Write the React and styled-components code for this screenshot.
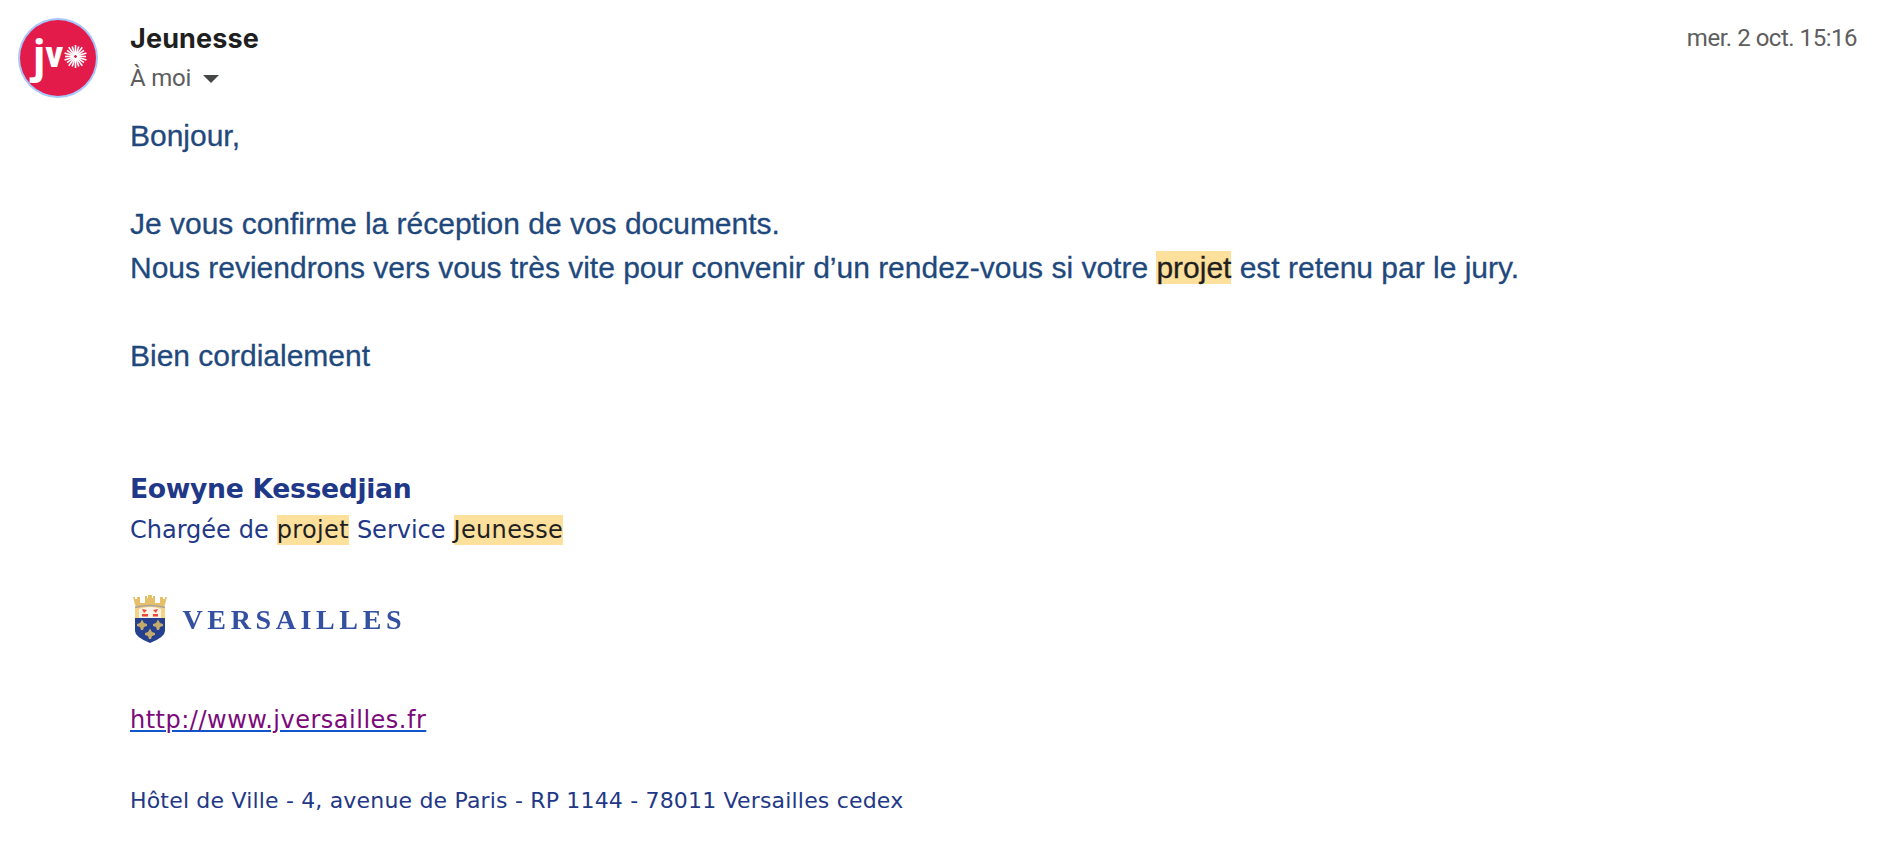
import styled, { createGlobalStyle } from 'styled-components';

const GlobalStyle = createGlobalStyle`
  * {
    box-sizing: border-box;
  }

  body {
    margin: 0;
    background-color: #fff;
  }
`;

const Message = styled.article`
  display: grid;
  grid-template-columns: 80px 1fr;
  column-gap: 32px;
  padding: 18px 23px 0 18px;
  height: 860px;
  overflow: hidden;
`;

const Avatar = styled.svg`
  display: block;
  width: 80px;
  height: 80px;
`;

const Header = styled.header`
  display: flex;
  justify-content: space-between;
  height: 96px;
  font-family: Roboto, 'Noto Sans', sans-serif;
`;

const Sender = styled.h3`
  margin: 0;
  padding-top: 3px;
  font-family: Inter, 'Open Sans', sans-serif;
  font-size: 27px;
  font-weight: 650;
  line-height: 36px;
  letter-spacing: 0.15px;
  color: #1f1f1f;
`;

const Recipient = styled.div`
  display: flex;
  align-items: center;
  gap: 12px;
  margin-top: 3px;
  font-size: 24px;
  line-height: 36px;
  letter-spacing: -0.2px;
  color: #5e5e5e;
`;

const Caret = styled.span`
  margin-top: 1px;
  border: 8px solid transparent;
  border-top-color: #444746;
  border-bottom: 0;
`;

const SentAt = styled.time`
  padding-top: 2px;
  font-size: 24px;
  line-height: 36px;
  letter-spacing: -0.48px;
  color: #5e5e5e;
`;

const Body = styled.div`
  font-family: 'Liberation Sans', Arial, sans-serif;
  font-size: 30px;
  line-height: 44px;
  letter-spacing: -0.01px;
  color: #1f497d;
  -webkit-text-stroke: 0.3px;
`;

const Paragraph = styled.p`
  margin: 0 0 44px;
  white-space: nowrap;
`;

const Mark = styled.mark`
  background-color: #fce09b;
  color: #1f1f1f;
`;

const Signature = styled.footer`
  padding-top: 47px;
  font-family: 'DejaVu Sans', Verdana, sans-serif;
  color: #1f3887;
`;

const Name = styled.div`
  font-size: 26.67px;
  font-weight: 700;
  line-height: 40px;
  letter-spacing: -0.35px;
`;

const Role = styled.div`
  margin-top: 1px;
  font-size: 24px;
  line-height: 40px;
  word-spacing: 0.3px;

  ${Mark} {
    padding: 1px 0;
    letter-spacing: 0.35px;
  }
`;

const Logo = styled.svg`
  display: block;
  width: 276px;
  height: 50px;
  margin-top: 45px;
  filter: blur(0.6px);
`;

const Site = styled.a`
  display: block;
  width: max-content;
  margin-top: 55px;
  font-size: 24px;
  line-height: 40px;
  letter-spacing: 0.5px;
  color: #7b0a7b;
  text-decoration: underline #1155cc 1.5px;
  text-underline-offset: 2px;
`;

const Address = styled.div`
  margin-top: 41px;
  font-size: 22px;
  line-height: 40px;
  letter-spacing: 0.18px;
`;

const RAYS = Array.from({ length: 20 }, (_, i) => i * 18);

const JvAvatar = () => (
  <Avatar viewBox="0 0 80 80">
    <circle cx="40" cy="40" r="40" fill="#a8c7fa" />
    <circle cx="40" cy="40" r="38" fill="#e31b4b" />
    <g fill="#fff" fontWeight="700">
      <text x="14.5" y="54" fontFamily="'Open Sans', sans-serif" fontSize="44">
        j
      </text>
      <text
        x="27.5"
        y="48.5"
        fontFamily="Roboto, sans-serif"
        fontWeight="900"
        fontSize="36"
        textLength="17.5"
        lengthAdjust="spacingAndGlyphs"
      >
        v
      </text>
    </g>
    <g transform="translate(57.5 38.5)" stroke="#fff" strokeWidth="1.6">
      {RAYS.map((angle, i) => (
        <line key={angle} x1="0" y1="-1.5" x2="0" y2={i % 2 ? -10.5 : -11.5} transform={`rotate(${angle})`} />
      ))}
    </g>
  </Avatar>
);

const FLEURS = [
  [12, 30],
  [28, 30],
  [20, 39],
];

const VersaillesLogo = () => (
  <Logo viewBox="0 0 276 50">
    {/* crown */}
    <path d="M3 2h2v2h2V2h3v6h5V1h2v2h1V0h4v3h1V1h2v7h5V2h3v2h2V2h2l-3 11H6z" fill="#e6c069" />
    <path d="M5 12q15-4 30 0v12H5z" fill="#f3d388" />
    <path d="M9 14q11-4 22 0v9H9z" fill="#fdf3e6" />
    <path d="M5 12.500q15-4 30 0" fill="none" stroke="#a8a39a" strokeWidth="1.500" />
    <path d="M12 14l5 1-3 3zM28 14l-5 1 3 3zM12 19h6v2.500h-6zM23 19h5v2.500h-5z" fill="#ea4a35" />
    {/* shield */}
    <path d="M5 23h30v13q0 6-15 12Q5 42 5 36z" fill="#24408f" />
    {FLEURS.map(([x, y]) => (
      <path
        key={`${x}-${y}`}
        transform={`translate(${x} ${y})`}
        d="M0-5.500L2-2 5-1v2L2 2 1 5h-2L-2 2-5 1v-2l3-1z"
        fill="#c2ab6c"
      />
    ))}
    <text
      x="52.500"
      y="34.300"
      fontFamily="'Liberation Serif', serif"
      fontSize="28"
      fontWeight="700"
      textLength="219"
      fill="#3450a0"
    >
      VERSAILLES
    </text>
  </Logo>
);

const App = () => {
  return (
    <>
      <GlobalStyle />
      <Message>
        <JvAvatar />
        <div>
          <Header>
            <div>
              <Sender>Jeunesse</Sender>
              <Recipient>
                À moi
                <Caret />
              </Recipient>
            </div>
            <SentAt>mer. 2 oct. 15:16</SentAt>
          </Header>
          <Body>
            <Paragraph>Bonjour,</Paragraph>
            <Paragraph>
              Je vous confirme la réception de vos documents.
              <br />
              Nous reviendrons vers vous très vite pour convenir d’un rendez-vous si votre <Mark>projet</Mark> est
              retenu par le jury.
            </Paragraph>
            <Paragraph>Bien cordialement</Paragraph>
          </Body>
          <Signature>
            <Name>Eowyne Kessedjian</Name>
            <Role>
              Chargée de <Mark>projet</Mark> Service <Mark>Jeunesse</Mark>
            </Role>
            <VersaillesLogo />
            <Site href="http://www.jversailles.fr">http://www.jversailles.fr</Site>
            <Address>Hôtel de Ville - 4, avenue de Paris - RP 1144 - 78011 Versailles cedex</Address>
          </Signature>
        </div>
      </Message>
    </>
  );
};

export default App;
